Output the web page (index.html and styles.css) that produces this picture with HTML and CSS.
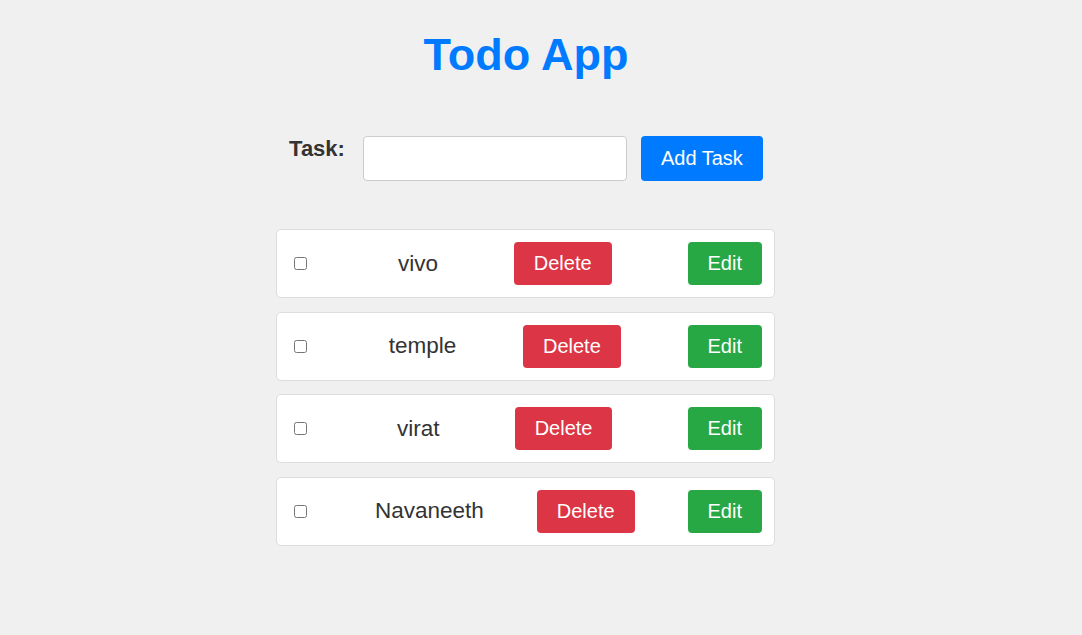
FILE: index.html
```html
<!DOCTYPE html>
<html lang="en">
<head>
<meta charset="utf-8">
<title>Todo App</title>
<link rel="stylesheet" href="styles.css">
</head>
<body>
<div class="page">
  <div class="app">
    <h1 class="title">Todo App</h1>
    <form class="task-form">
      <label class="task-label" for="task">Task:</label>
      <input class="task-input" id="task" type="text">
      <button class="btn btn-add" type="button">Add Task</button>
    </form>
    <ul class="todo-list">
      <li class="todo-item">
        <input class="todo-check" type="checkbox">
        <span class="todo-text">vivo</span>
        <button class="btn btn-delete" type="button">Delete</button>
        <button class="btn btn-edit" type="button">Edit</button>
      </li>
      <li class="todo-item">
        <input class="todo-check" type="checkbox">
        <span class="todo-text">temple</span>
        <button class="btn btn-delete" type="button">Delete</button>
        <button class="btn btn-edit" type="button">Edit</button>
      </li>
      <li class="todo-item">
        <input class="todo-check" type="checkbox">
        <span class="todo-text">virat</span>
        <button class="btn btn-delete" type="button">Delete</button>
        <button class="btn btn-edit" type="button">Edit</button>
      </li>
      <li class="todo-item">
        <input class="todo-check" type="checkbox">
        <span class="todo-text">Navaneeth</span>
        <button class="btn btn-delete" type="button">Delete</button>
        <button class="btn btn-edit" type="button">Edit</button>
      </li>
    </ul>
  </div>
</div>
</body>
</html>
```
FILE: styles.css
```css
html, body {
  margin: 0;
  padding: 0;
  background: #f0f0f0;
  font-family: "Liberation Sans", Arial, sans-serif;
  color: #333;
}

.page {
  padding-right: 30px;
}

.app {
  width: 500px;
  margin: 0 auto;
}

.title {
  margin: 29px 0 55px;
  font-size: 45px;
  font-weight: bold;
  color: #007bff;
  text-align: center;
}

.task-form {
  display: flex;
  justify-content: center;
  margin: 0 0 48px;
  height: 45px;
}

.task-label {
  font-size: 22px;
  font-weight: bold;
  color: #333;
  margin-right: 18px;
}

.task-input {
  box-sizing: border-box;
  width: 264px;
  height: 45px;
  margin: 0 14px 0 0;
  padding: 5px 10px;
  border: 1px solid #ccc;
  border-radius: 4px;
  background: #fff;
  font-family: inherit;
  font-size: 20px;
}

.btn {
  font-family: "Liberation Sans", Arial, sans-serif;
  font-size: 20px;
  line-height: 23px;
  padding: 10px 20px;
  border: none;
  border-radius: 4px;
  color: #fff;
  cursor: pointer;
}

.btn-add {
  background: #007bff;
  width: 122px;
  padding: 0;
}

.btn-delete {
  background: #dc3545;
}

.btn-edit {
  background: #28a745;
}

.todo-list {
  list-style: none;
  margin: 0;
  padding: 0;
}

.todo-item {
  box-sizing: border-box;
  display: flex;
  align-items: center;
  justify-content: space-between;
  width: 499px;
  padding: 12px;
  margin-bottom: 13.5px;
  background: #fff;
  border: 1px solid #ddd;
  border-radius: 5px;
}

.todo-check {
  width: 13px;
  height: 13px;
  margin: 3px 15px 3px 5px;
}

.todo-text {
  font-size: 22.5px;
  color: #333;
}
```
